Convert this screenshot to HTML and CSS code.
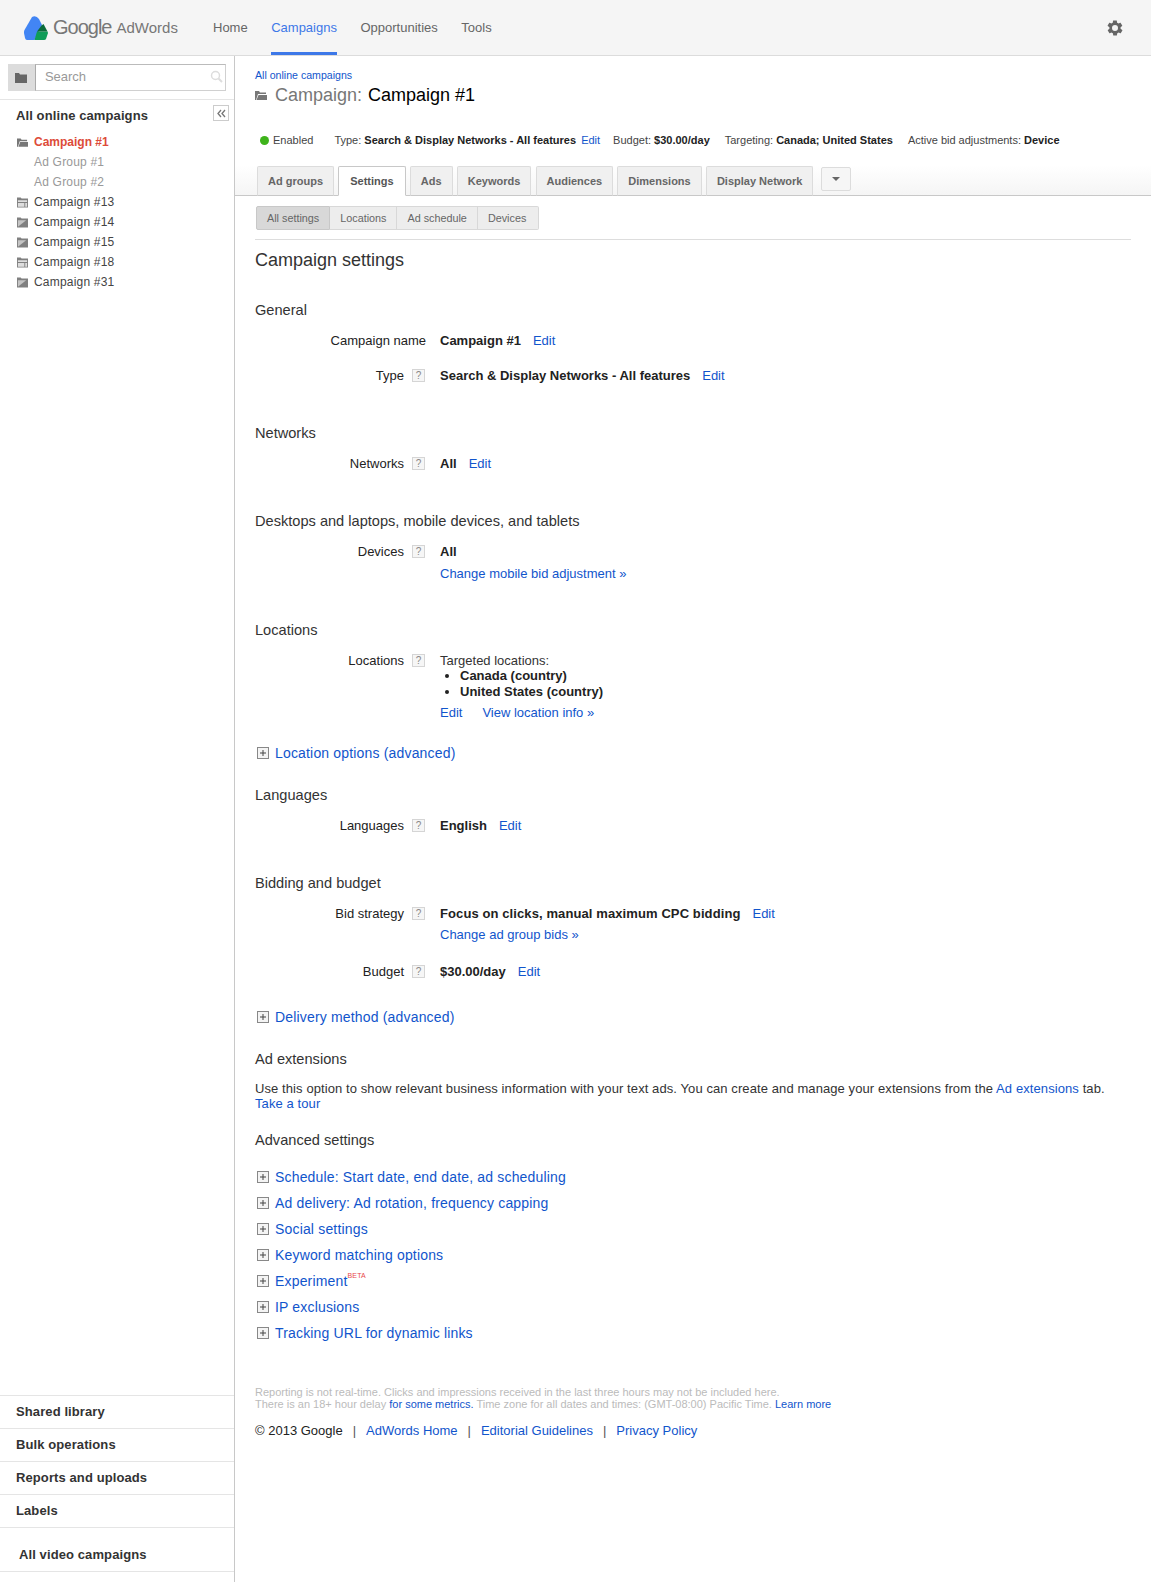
FILE: index.html
```html
<!doctype html>
<html lang="en">
    <head>
        <meta charset="UTF-8">
        <title>Google AdWords - Campaign settings</title>
        <link rel="stylesheet" href="styles.css">
    </head>
    <body>
        <svg class="icon-defs" width="0" height="0">
            <symbol id="ic-open" viewBox="0 0 12 11">
                <path d="M0 1h4l1 1.500h6V4H3L1 10H0z" fill="#777"/>
                <path d="M3.500 5H12v5H1.500z" fill="#777"/>
            </symbol>
            <symbol id="ic-table" viewBox="0 0 12 11">
                <path d="M0 0h4l1 1h7v10H0z" fill="#808080"/>
                <path d="M1 3h10v2H1zM1 6h7v4H1zM9 6h2v4H9z" fill="#ddd"/>
            </symbol>
            <symbol id="ic-ended" viewBox="0 0 12 11">
                <path d="M0 0h4l1 1h7v10H0z" fill="#808080"/>
                <path d="M1 10L10 3H1z" fill="#c4c4c4"/>
            </symbol>
            <symbol id="ic-plus" viewBox="0 0 12 12">
                <rect x=".5" y=".5" width="11" height="11" fill="#f4f4f4" stroke="#888"/>
                <path d="M3 6h6M6 3v6" stroke="#444"/>
            </symbol>
        </svg>

        <!-- Barre du haut -->
        <header class="topbar">
            <div class="logo">
                <svg width="24" height="24" viewBox="0 0 24 24">
                    <path d="M8 1Q12-1 15 3L18 9 10.500 24H3Q1.500 24 1 22L0 17Q-.2 15.500.5 14z" fill="#4285f4"/>
                    <path d="M13 15.500H23.500L24 17 22 23Q21.500 24 20 24H10.500z" fill="#0f9d58"/>
                    <path d="M17.500 9.500L19.500 8 23.500 15.500H13z" fill="#0b6b3a"/>
                </svg>
                <span class="logo-google">Google</span>
                <span class="logo-product">AdWords</span>
            </div>
            <nav class="topnav">
                <a href="#">Home</a>
                <a href="#" class="active">Campaigns</a>
                <a href="#">Opportunities</a>
                <a href="#">Tools</a>
            </nav>
            <svg class="gear" width="18" height="18" viewBox="0 0 24 24">
                <path fill-rule="evenodd" d="M19.400 13c.1-.3.1-.7.100-1s0-.7-.1-1l2.100-1.600c.2-.1.2-.4.100-.6l-2-3.500c-.1-.2-.4-.3-.6-.2l-2.500 1c-.5-.4-1.100-.7-1.700-1l-.4-2.700c0-.2-.2-.4-.5-.4h-4c-.3 0-.5.200-.5.400l-.4 2.700c-.6.300-1.200.6-1.700 1l-2.500-1c-.2-.1-.5 0-.6.200l-2 3.500c-.1.200-.1.500.1.600L4.600 11c-.1.300-.1.700-.1 1s0 .7.100 1l-2.100 1.600c-.2.100-.2.400-.1.600l2 3.500c.1.200.4.300.6.200l2.500-1c.5.400 1.100.7 1.700 1l.4 2.700c0 .2.200.4.500.4h4c.3 0 .5-.2.500-.4l.4-2.700c.6-.3 1.200-.6 1.700-1l2.500 1c.2.100.5 0 .6-.2l2-3.500c.1-.2.100-.5-.1-.6zM12 16a4 4 0 1 1 0-8 4 4 0 0 1 0 8z" fill="#666"/>
            </svg>
        </header>

        <div class="layout">
            <!-- Colonne de gauche -->
            <aside class="sidebar">
                <div class="search-row">
                    <span class="search-btn">
                        <svg width="12" height="10" viewBox="0 0 12 10"><path d="M0 0h4l1 1.500h7V10H0z" fill="#666"/></svg>
                    </span>
                    <div class="search-box">
                        <span class="search-text">Search</span>
                        <svg width="13" height="13" viewBox="0 0 13 13"><circle cx="5.500" cy="5.500" r="4" fill="none" stroke="#ddd" stroke-width="1.500"/><path d="M8.500 8.500L12 12" stroke="#ddd" stroke-width="2"/></svg>
                    </div>
                </div>
                <div class="tree-title">
                    <span>All online campaigns</span>
                    <span class="collapse">
                        <svg width="9" height="9" viewBox="0 0 9 9"><path d="M4 1L1 4.500 4 8M8 1L5 4.500 8 8" fill="none" stroke="#777" stroke-width="1.300"/></svg>
                    </span>
                </div>
                <ul class="tree">
                    <li class="current"><svg class="tree-icon"><use href="#ic-open"/></svg>Campaign #1</li>
                    <li class="adgroup">Ad Group #1</li>
                    <li class="adgroup">Ad Group #2</li>
                    <li><svg class="tree-icon"><use href="#ic-table"/></svg>Campaign #13</li>
                    <li><svg class="tree-icon"><use href="#ic-ended"/></svg>Campaign #14</li>
                    <li><svg class="tree-icon"><use href="#ic-ended"/></svg>Campaign #15</li>
                    <li><svg class="tree-icon"><use href="#ic-table"/></svg>Campaign #18</li>
                    <li><svg class="tree-icon"><use href="#ic-ended"/></svg>Campaign #31</li>
                </ul>
                <div class="side-links">
                    <a href="#">Shared library</a>
                    <a href="#">Bulk operations</a>
                    <a href="#">Reports and uploads</a>
                    <a href="#">Labels</a>
                    <a href="#" class="video">All video campaigns</a>
                </div>
            </aside>

            <!-- Contenu -->
            <main class="content">
                <div class="page-head">
                    <a href="#" class="crumb">All online campaigns</a>
                    <h1><svg class="title-icon"><use href="#ic-open"/></svg><span class="title-label">Campaign:</span> Campaign #1</h1>
                    <div class="status-bar">
                        <span class="status-on"><i class="dot"></i>Enabled</span>
                        <span>Type: <b>Search &amp; Display Networks - All features</b> <a href="#" class="status-edit">Edit</a></span>
                        <span>Budget: <b>$30.00/day</b></span>
                        <span>Targeting: <b>Canada; United States</b></span>
                        <span>Active bid adjustments: <b>Device</b></span>
                    </div>
                </div>

                <div class="tabs">
                    <a href="#" class="tab">Ad groups</a>
                    <a href="#" class="tab active">Settings</a>
                    <a href="#" class="tab">Ads</a>
                    <a href="#" class="tab">Keywords</a>
                    <a href="#" class="tab">Audiences</a>
                    <a href="#" class="tab">Dimensions</a>
                    <a href="#" class="tab">Display Network</a>
                    <span class="tab-more"><i class="caret"></i></span>
                </div>

                <div class="body">
                    <div class="subtabs">
                        <a href="#" class="active">All settings</a>
                        <a href="#">Locations</a>
                        <a href="#">Ad schedule</a>
                        <a href="#">Devices</a>
                    </div>

                    <h2>Campaign settings</h2>

                    <section class="group first">
                        <h3>General</h3>
                        <div class="row no-help">
                            <div class="label">Campaign name</div>
                            <div class="help-slot"></div>
                            <div class="value"><b>Campaign #1</b><a href="#" class="edit">Edit</a></div>
                        </div>
                        <div class="row">
                            <div class="label">Type</div>
                            <div class="help-slot"><span class="help">?</span></div>
                            <div class="value"><b>Search &amp; Display Networks - All features</b><a href="#" class="edit">Edit</a></div>
                        </div>
                    </section>

                    <section class="group">
                        <h3>Networks</h3>
                        <div class="row">
                            <div class="label">Networks</div>
                            <div class="help-slot"><span class="help">?</span></div>
                            <div class="value"><b>All</b><a href="#" class="edit">Edit</a></div>
                        </div>
                    </section>

                    <section class="group">
                        <h3>Desktops and laptops, mobile devices, and tablets</h3>
                        <div class="row">
                            <div class="label">Devices</div>
                            <div class="help-slot"><span class="help">?</span></div>
                            <div class="value">
                                <b>All</b>
                                <a href="#" class="block-link">Change mobile bid adjustment »</a>
                            </div>
                        </div>
                    </section>

                    <section class="group locations">
                        <h3>Locations</h3>
                        <div class="row">
                            <div class="label">Locations</div>
                            <div class="help-slot"><span class="help">?</span></div>
                            <div class="value">
                                Targeted locations:
                                <ul class="loc-list">
                                    <li>Canada (country)</li>
                                    <li>United States (country)</li>
                                </ul>
                                <a href="#">Edit</a><a href="#" class="loc-info">View location info »</a>
                            </div>
                        </div>
                        <a href="#" class="expander after-row"><svg class="plus"><use href="#ic-plus"/></svg>Location options (advanced)</a>
                    </section>

                    <section class="group tight">
                        <h3>Languages</h3>
                        <div class="row">
                            <div class="label">Languages</div>
                            <div class="help-slot"><span class="help">?</span></div>
                            <div class="value"><b>English</b><a href="#" class="edit">Edit</a></div>
                        </div>
                    </section>

                    <section class="group">
                        <h3>Bidding and budget</h3>
                        <div class="row">
                            <div class="label">Bid strategy</div>
                            <div class="help-slot"><span class="help">?</span></div>
                            <div class="value">
                                <b class="wide-text">Focus on clicks, manual maximum CPC bidding</b><a href="#" class="edit">Edit</a>
                                <a href="#" class="block-link bid-link">Change ad group bids »</a>
                            </div>
                        </div>
                        <div class="row">
                            <div class="label">Budget</div>
                            <div class="help-slot"><span class="help">?</span></div>
                            <div class="value"><b>$30.00/day</b><a href="#" class="edit">Edit</a></div>
                        </div>
                        <a href="#" class="expander after-budget"><svg class="plus"><use href="#ic-plus"/></svg>Delivery method (advanced)</a>
                    </section>

                    <section class="group tight">
                        <h3>Ad extensions</h3>
                        <p class="ext-text">Use this option to show relevant business information with your text ads. You can create and manage your extensions from the <a href="#">Ad extensions</a> tab.<br><a href="#">Take a tour</a></p>
                    </section>

                    <section class="group advanced">
                        <h3>Advanced settings</h3>
                        <a href="#" class="expander"><svg class="plus"><use href="#ic-plus"/></svg>Schedule: Start date, end date, ad scheduling</a>
                        <a href="#" class="expander"><svg class="plus"><use href="#ic-plus"/></svg>Ad delivery: Ad rotation, frequency capping</a>
                        <a href="#" class="expander"><svg class="plus"><use href="#ic-plus"/></svg>Social settings</a>
                        <a href="#" class="expander"><svg class="plus"><use href="#ic-plus"/></svg>Keyword matching options</a>
                        <a href="#" class="expander"><svg class="plus"><use href="#ic-plus"/></svg>Experiment<sup class="beta">BETA</sup></a>
                        <a href="#" class="expander"><svg class="plus"><use href="#ic-plus"/></svg>IP exclusions</a>
                        <a href="#" class="expander"><svg class="plus"><use href="#ic-plus"/></svg>Tracking URL for dynamic links</a>
                    </section>

                    <footer class="page-foot">
                        <p class="disclaimer">Reporting is not real-time. Clicks and impressions received in the last three hours may not be included here.<br>There is an 18+ hour delay <a href="#">for some metrics.</a> Time zone for all dates and times: (GMT-08:00) Pacific Time. <a href="#">Learn more</a></p>
                        <p class="foot-links">© 2013 Google<i>|</i><a href="#">AdWords Home</a><i>|</i><a href="#">Editorial Guidelines</a><i>|</i><a href="#">Privacy Policy</a></p>
                    </footer>
                </div>
            </main>
        </div>
    </body>
</html>
```

FILE: styles.css
```css
:root {
    --link-color: #1155cc;
    --line-color: #e5e5e5;
    --dark-line: #c8c8c8;
    --text-color: #333;
}
* {
    box-sizing: border-box;
}
html {
    font-family: "Liberation Sans", Arial, sans-serif;
    font-size: 13px;
    color: var(--text-color);
    background-color: #fff;
}
body {
    margin: 0;
}
a {
    color: var(--link-color);
    text-decoration: none;
}
.icon-defs {
    position: absolute;
}

/* Barre du haut */
.topbar {
    display: flex;
    align-items: center;
    height: 56px;
    padding-left: 24px;
    background-color: #f5f5f5;
    border-bottom: 1px solid #dcdcdc;
}
.logo {
    display: flex;
    align-items: center;
    width: 189px;
    color: #777;
}
.logo-google {
    margin-left: 5px;
    font-size: 20px;
    letter-spacing: -1px;
}
.logo-product {
    margin-left: 5px;
    font-size: 15px;
}
.topnav {
    display: flex;
    align-self: stretch;
    gap: 23.500px;
}
.topnav a {
    display: flex;
    align-items: center;
    height: 55px;
    color: #666;
    font-size: 13px;
    border-bottom: 3px solid transparent;
    padding-top: 3px;
}
.topnav a.active {
    color: #3d78e8;
    border-bottom-color: #3d78e8;
}
.gear {
    margin-left: auto;
    margin-right: 27px;
}

.layout {
    display: flex;
    min-height: 1526px;
}

/* Colonne de gauche */
.sidebar {
    display: flex;
    flex-direction: column;
    flex: none;
    width: 235px;
    padding-bottom: 10px;
    border-right: 1px solid var(--dark-line);
}
.search-row {
    display: flex;
    height: 44px;
    padding: 8px 8px 8px 8px;
    border-bottom: 1px solid var(--line-color);
}
.search-btn {
    display: flex;
    align-items: center;
    justify-content: center;
    width: 27px;
    height: 27px;
    background-color: #dcdcdc;
}
.search-box {
    display: flex;
    align-items: center;
    justify-content: space-between;
    width: 192px;
    height: 27px;
    padding: 0 2px 2px 9px;
    border: 1px solid #d0d0d0;
    border-left: 1px solid #aaa;
    border-top-color: #bbb;
}
.search-text {
    color: #999;
    font-size: 13px;
}
.tree-title {
    display: flex;
    justify-content: space-between;
    padding: 5px 5px 0 16px;
    height: 32px;
    font-weight: bold;
    letter-spacing: 0.1px;
    line-height: 22px;
}
.collapse {
    display: flex;
    align-items: center;
    justify-content: center;
    width: 16px;
    height: 16px;
    border: 1px solid #ccc;
}
.tree {
    list-style: none;
    margin: 0;
    padding: 0;
}
.tree li {
    display: flex;
    align-items: center;
    height: 20px;
    padding-left: 17px;
    color: #444;
    font-size: 12px;
    letter-spacing: 0.2px;
}
.tree-icon {
    width: 11px;
    height: 11px;
    margin-right: 6px;
}
.tree .current {
    color: #dd4b39;
    font-weight: bold;
    letter-spacing: 0;
}
.tree .adgroup {
    padding-left: 34px;
    color: #999;
}
.side-links {
    margin-top: auto;
    border-top: 1px solid var(--line-color);
}
.side-links a {
    display: flex;
    align-items: center;
    height: 33px;
    padding-left: 16px;
    padding-bottom: 2px;
    color: var(--text-color);
    font-weight: bold;
    letter-spacing: 0.1px;
    border-bottom: 1px solid var(--line-color);
}
.side-links .video {
    height: 44px;
    padding-left: 19px;
    padding-top: 10px;
    padding-bottom: 0;
}

/* Contenu */
.content {
    flex: 1;
    min-width: 0;
}
.page-head {
    padding: 13px 20px 0;
    height: 109px;
}
.crumb {
    display: block;
    font-size: 10.600px;
    line-height: 13px;
}
h1 {
    display: flex;
    align-items: center;
    margin: 1px 0 0;
    font-size: 18px;
    font-weight: normal;
    line-height: 24px;
    color: #000;
}
.title-icon {
    width: 12px;
    height: 11px;
    margin-right: 8px;
}
.title-label {
    color: #777;
    margin-right: 6px;
}
.status-bar {
    display: flex;
    gap: 15px;
    margin-top: 26px;
    padding-left: 5px;
    font-size: 11px;
    line-height: 14px;
    white-space: nowrap;
    color: #444;
}
.status-bar b {
    color: #222;
}
.status-on {
    display: flex;
    align-items: center;
    margin-right: 6px;
}
.dot {
    width: 9px;
    height: 9px;
    margin-right: 4px;
    border-radius: 50%;
    background-color: #3eb31b;
}
.status-edit {
    margin-left: 2px;
    margin-right: -2px;
}

.tabs {
    display: flex;
    align-items: flex-end;
    gap: 4.200px;
    height: 31px;
    padding-left: 22px;
    background-image: linear-gradient(#fff, #f5f5f5);
    border-bottom: 1px solid var(--dark-line);
}
.tab {
    display: flex;
    align-items: center;
    justify-content: center;
    height: 30px;
    padding: 0 10px;
    margin-bottom: -1px;
    color: #666;
    font-size: 11px;
    font-weight: bold;
    background-color: #f0f0f0;
    border: 1px solid #dcdcdc;
    border-bottom-color: var(--dark-line);
    border-radius: 2px 2px 0 0;
}
.tab.active {
    padding: 0 11px;
    color: #555;
    background-color: #fff;
    border-color: var(--dark-line);
    border-bottom-color: #fff;
}
.tab-more {
    display: flex;
    align-items: center;
    justify-content: center;
    align-self: flex-start;
    width: 30px;
    height: 24px;
    margin: 2px 0 0 3px;
    background-color: #f6f6f6;
    border: 1px solid #dcdcdc;
    border-radius: 2px;
}
.caret {
    border: 4px solid transparent;
    border-top-color: #666;
    border-bottom-width: 0;
}

.body {
    padding: 10px 20px 0;
}
.subtabs {
    display: flex;
    height: 24px;
    margin-left: 1px;
    border-radius: 2px;
}
.subtabs a {
    display: flex;
    align-items: center;
    padding: 0 10px;
    font-size: 10.800px;
    color: #666;
    background-color: #ededed;
    border: 1px solid #d8d8d8;
    border-left-width: 0;
}
.subtabs a:first-child {
    border-left-width: 1px;
    border-radius: 2px 0 0 2px;
}
.subtabs a:last-child {
    padding-right: 12px;
    border-radius: 0 2px 2px 0;
}
.subtabs .active {
    background-color: #d8d8d8;
    border-color: #c8c8c8;
}
h2 {
    margin: 9px 0 0;
    padding-top: 9px;
    border-top: 1px solid #ddd;
    font-size: 18px;
    font-weight: normal;
    line-height: 22px;
}
h3 {
    margin: 0;
    font-size: 14.600px;
    font-weight: normal;
    line-height: 18px;
}
.group {
    margin-top: 40px;
}
.group.first {
    margin-top: 30px;
}
.group.locations {
    margin-top: 39px;
}
.group.tight {
    margin-top: 20px;
}
.group.advanced {
    margin-top: 20px;
}
.row {
    display: flex;
    margin-top: 14px;
    line-height: 16px;
}
.row + .row {
    margin-top: 19px;
}
.row:has(.bid-link) + .row {
    margin-top: 21px;
}
.label {
    width: 149px;
    text-align: right;
    color: #222;
}
.help-slot {
    width: 36px;
    padding-left: 8px;
}
.no-help .label {
    width: 171px;
}
.no-help .help-slot {
    width: 14px;
}
.help {
    display: flex;
    align-items: center;
    justify-content: center;
    width: 13px;
    height: 13px;
    margin-top: 1px;
    color: #888;
    font-size: 10px;
    background-color: #f6f6f6;
    border: 1px solid #d5d5d5;
}
.value b {
    color: #222;
}
.wide-text {
    letter-spacing: 0.1px;
}
.edit {
    margin-left: 12px;
}
.block-link {
    display: block;
    margin-top: 6px;
}
.block-link.bid-link {
    margin-top: 5px;
}
.loc-list {
    margin: -1px 0 0;
    padding-left: 20px;
    font-weight: bold;
    color: #222;
}
.loc-info {
    margin-left: 20px;
}
.loc-list + a {
    display: inline-block;
    margin-top: 5px;
}
.expander {
    display: flex;
    align-items: center;
    height: 26px;
    font-size: 14px;
    letter-spacing: 0.17px;
}
.advanced .expander:first-of-type {
    margin-top: 15px;
}
.after-row {
    margin-top: 19px;
}
.after-budget {
    margin-top: 24px;
}
.plus {
    width: 12px;
    height: 12px;
    margin: 0 6px 0 2px;
}
.beta {
    align-self: flex-start;
    margin: 3px 0 0;
    font-size: 7px;
    line-height: 10px;
    color: #e8474a;
}
.ext-text {
    margin: 13px 0 0;
    line-height: 15px;
    letter-spacing: 0.09px;
}
.page-foot {
    margin-top: 40px;
}
.disclaimer {
    margin: 0;
    font-size: 11px;
    line-height: 12px;
    color: #bbb;
}
.foot-links {
    margin: 13px 0 0;
    line-height: 16px;
    color: #222;
}
.foot-links i {
    margin: 0 10px;
    font-style: normal;
    color: #555;
}
```
